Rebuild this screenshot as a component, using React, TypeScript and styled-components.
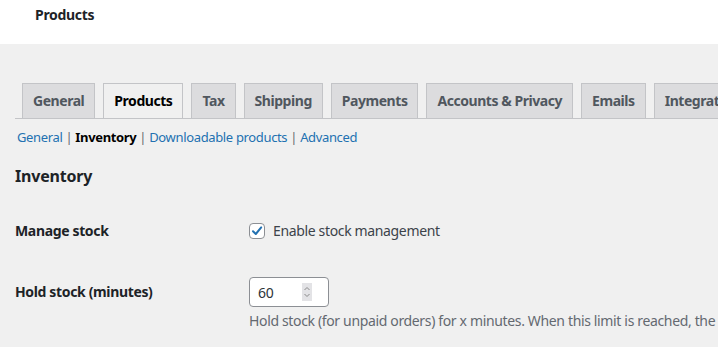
import React from "react";
import styled, { createGlobalStyle } from "styled-components";

const Global = createGlobalStyle`
  html, body { margin: 0; padding: 0; }
  body {
    background: #f0f0f0;
    font-family: "Noto Sans", "Open Sans", sans-serif;
    color: #1d2327;
    overflow: hidden;
  }
`;

const Header = styled.header`
  background: #fff;
  height: 44px;
  box-sizing: border-box;
  padding: 6px 0 0 35px;
  font-size: 14px;
  font-weight: 700;
  line-height: 18px;
  letter-spacing: -0.3px;
  color: #1d2327;
`;

const Wrap = styled.main`
  padding-left: 15px;
`;

const TabBar = styled.nav`
  margin-top: 39px;
  display: flex;
  padding-left: 7px;
  border-bottom: 1px solid #c3c4c7;
  white-space: nowrap;
  overflow: hidden;
  height: 35px;
  gap: 8px;
`;

const Tab = styled.a<{ $active?: boolean }>`
  flex: none;
  box-sizing: border-box;
  height: 36px;
  padding: 5px 10px;
  font-size: 14px;
  font-weight: 700;
  line-height: 24px;
  letter-spacing: -0.45px;
  border: 1px solid #c3c4c7;
  border-bottom-color: ${(p) => (p.$active ? "#f0f0f0" : "#c3c4c7")};
  background: ${(p) => (p.$active ? "#f0f0f0" : "#dcdcde")};
  color: ${(p) => (p.$active ? "#000" : "#50575e")};
  text-decoration: none;
`;

const SubNav = styled.ul`
  list-style: none;
  margin: 9px 0 0 2px;
  padding: 0;
  display: flex;
  font-size: 13px;
  line-height: 18px;
  letter-spacing: -0.35px;
  color: #646970;
`;

const SubItem = styled.li`
  white-space: pre;
`;

const SubLink = styled.a<{ $current?: boolean }>`
  color: ${(p) => (p.$current ? "#000" : "#2271b1")};
  font-weight: ${(p) => (p.$current ? 700 : 400)};
  text-decoration: none;
`;

const Heading = styled.h2`
  margin: 19px 0 0;
  font-size: 16px;
  font-weight: 700;
  line-height: 22px;
  letter-spacing: -0.2px;
  color: #1d2327;
`;

const FormTable = styled.div`
  margin-top: 34px;
  display: flex;
  flex-direction: column;
  gap: 35px;
`;

const Row = styled.div`
  display: grid;
  grid-template-columns: 234px 1fr;
  align-items: start;
`;

const Label = styled.div<{ $top: number }>`
  font-size: 14px;
  font-weight: 700;
  line-height: 20px;
  letter-spacing: -0.35px;
  padding-top: ${(p) => p.$top}px;
  color: #1d2327;
`;

const Field = styled.div`
  display: flex;
  flex-direction: column;
  font-size: 14px;
  letter-spacing: -0.35px;
  color: #3c434a;
`;

const CheckLine = styled.label`
  display: flex;
  align-items: center;
  gap: 8px;
  line-height: 20px;
  height: 22px;
  margin-top: -1px;
`;

const Box = styled.span`
  width: 16px;
  height: 16px;
  box-sizing: border-box;
  border: 1px solid #8c8f94;
  border-radius: 4px;
  background: #fff;
  display: flex;
  align-items: center;
  justify-content: center;
`;

const NumberBox = styled.div`
  width: 80px;
  height: 30px;
  box-sizing: border-box;
  border: 1px solid #8c8f94;
  border-radius: 4px;
  background: #fff;
  display: flex;
  align-items: center;
  justify-content: space-between;
  padding: 0 16px 0 8px;
  font-size: 14px;
  color: #2c3338;
`;

const Spinner = styled.span`
  width: 10px;
  height: 18px;
  background: #e3e3e6;
  display: flex;
  align-items: center;
  justify-content: center;
`;

const Desc = styled.p`
  margin: 4px 0 0;
  font-size: 14px;
  line-height: 20px;
  color: #646970;
  white-space: nowrap;
`;

const tabs = [
  "General",
  "Products",
  "Tax",
  "Shipping",
  "Payments",
  "Accounts & Privacy",
  "Emails",
  "Integration",
];

const subs = ["General", "Inventory", "Downloadable products", "Advanced"];

export default function App() {
  return (
    <>
      <Global />
      <Header>Products</Header>
      <Wrap>
        <TabBar>
          {tabs.map((t) => (
            <Tab key={t} $active={t === "Products"}>
              {t}
            </Tab>
          ))}
        </TabBar>
        <SubNav>
          {subs.map((s, i) => (
            <SubItem key={s}>
              <SubLink $current={s === "Inventory"}>{s}</SubLink>
              {i < subs.length - 1 ? " | " : ""}
            </SubItem>
          ))}
        </SubNav>
        <Heading>Inventory</Heading>
        <FormTable>
          <Row>
            <Label $top={0}>Manage stock</Label>
            <Field>
              <CheckLine>
                <Box>
                  <svg width="12" height="12" viewBox="0 0 12 12">
                    <path
                      d="M2 6.2 L4.8 9 L10.2 2.4"
                      fill="none"
                      stroke="#2271b1"
                      strokeWidth="2"
                      strokeLinecap="round"
                      strokeLinejoin="round"
                    />
                  </svg>
                </Box>
                Enable stock management
              </CheckLine>
            </Field>
          </Row>
          <Row>
            <Label $top={5}>Hold stock (minutes)</Label>
            <Field>
              <NumberBox>
                60
                <Spinner>
                  <svg width="8" height="14" viewBox="0 0 8 14">
                    <path d="M1.5 5 L4 2.5 L6.5 5 M1.5 9 L4 11.5 L6.5 9" fill="none" stroke="#8a8a8a" strokeWidth="1" />
                  </svg>
                </Spinner>
              </NumberBox>
              <Desc>
                Hold stock (for unpaid orders) for x minutes. When this limit is reached, the pending order will be cancelled.
              </Desc>
            </Field>
          </Row>
        </FormTable>
      </Wrap>
    </>
  );
}
